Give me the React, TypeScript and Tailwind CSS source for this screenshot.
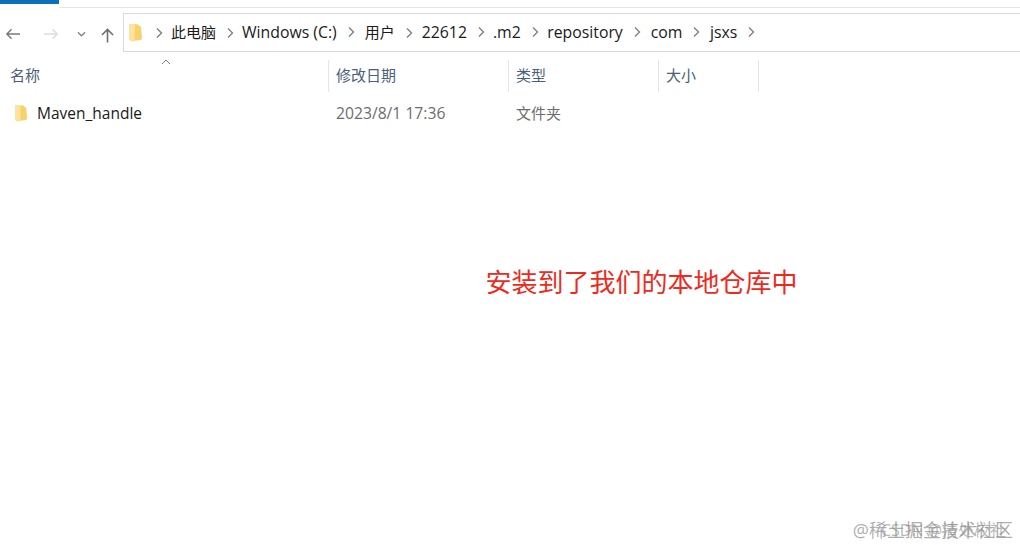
const crumbs = [
  { label: "此电脑", className: "ml-[8px] text-[15px]" },
  { label: "Windows (C:)", className: "ml-[8px]" },
  { label: "用户", className: "ml-[10px] text-[15px]" },
  { label: "22612", className: "ml-[9px]" },
  { label: ".m2", className: "ml-[8px]" },
  { label: "repository", className: "ml-[8.500px]" },
  { label: "com", className: "ml-[10px]" },
  { label: "jsxs", className: "ml-[9.500px]" },
];

const columns = [
  { label: "修改日期", width: "w-[180px]" },
  { label: "类型", width: "w-[150px]" },
  { label: "大小", width: "w-[100px]" },
];

function Folder({ className }: { className: string }) {
  return (
    <svg viewBox="0 0 14 18" className={className}>
      <path d="M0 0h9l1 2 2 1v13l-9 1.500-3-1.500z" fill="#fce08a" />
      <path d="M6 1h3l3 2 1 11-1 2H6z" fill="#f7d26c" />
      <path d="M0 0h5v16H0z" fill="#fbe4a0" />
    </svg>
  );
}

function Chevron() {
  return (
    <svg viewBox="0 0 8 12" className="w-[8px] h-[12px] shrink-0">
      <path d="M2 1.500 6.500 6 2 10.500" fill="none" stroke="#808080" strokeWidth="1.4" />
    </svg>
  );
}

export default function App() {
  return (
    <div
      className="relative w-[1020px] h-[545px] overflow-hidden bg-white"
      style={{ fontFamily: '"Open Sans", "Noto Sans CJK SC", sans-serif' }}
    >
      {/* ribbon tab strip */}
      <div className="flex h-[8px]">
        <div className="w-[59px] h-[4px] bg-[#0d6fb8]" />
        <div className="flex-1 h-[8px] border-b border-[#e4e4e4]" />
      </div>

      {/* nav + address bar */}
      <div className="flex h-[39px] mt-[5px]">
        <div className="w-[123px] shrink-0 flex items-center pl-[5px] pt-[2px]">
          <svg viewBox="0 0 16 12" className="w-[15px] h-[12px]">
            <path d="M16 6H2M7 1 2 6l5 5" fill="none" stroke="#7a7a7a" strokeWidth="1.600" />
          </svg>
          <svg viewBox="0 0 16 12" className="w-[15px] h-[12px] ml-[24px]">
            <path d="M0 6h14M9 1l5 5-5 5" fill="none" stroke="#dcdcdc" strokeWidth="1.600" />
          </svg>
          <svg viewBox="0 0 10 6" className="w-[9px] h-[6px] ml-[18px]">
            <path d="M1 1l4 4 4-4" fill="none" stroke="#808080" strokeWidth="1.4" />
          </svg>
          <svg viewBox="0 0 14 16" className="w-[13px] h-[16px] ml-[15px] mt-[3px]">
            <path d="M7 16V2M1 8l6-6 6 6" fill="none" stroke="#6e6e6e" strokeWidth="1.700" />
          </svg>
        </div>
        <div className="flex-1 flex items-center border border-r-0 border-[#d9d9d9] pl-[5px] text-[15.8px] text-[#1a1a1a]">
          <Folder className="w-[14px] h-[18px] shrink-0" />
          <div className="ml-[12px]">
            <Chevron />
          </div>
          {crumbs.map((crumb) => (
            <div key={crumb.label} className="flex items-center">
              <span className={`${crumb.className} mr-[10px] leading-none whitespace-nowrap`}>{crumb.label}</span>
              <Chevron />
            </div>
          ))}
        </div>
      </div>

      {/* column headers */}
      <div className="relative flex h-[32px] mt-[8px] text-[15px] text-[#4c607a]">
        <div className="w-[329px] pl-[10px] pb-[2px] flex items-center border-r border-[#e5e5e5]">名称</div>
        {columns.map((col) => (
          <div key={col.label} className={`${col.width} pl-[7px] pb-[2px] flex items-center border-r border-[#e5e5e5]`}>
            {col.label}
          </div>
        ))}
        <svg viewBox="0 0 10 6" className="absolute left-[161px] top-[-1px] w-[10px] h-[6px]">
          <path d="M1 5l4-4 4 4" fill="none" stroke="#808080" strokeWidth="1" />
        </svg>
      </div>

      {/* file row */}
      <div className="flex items-center h-[24px] mt-[9px] text-[15.500px]">
        <div className="w-[329px] flex items-center pl-[15px] text-[#1a1a1a]">
          <Folder className="w-[13px] h-[17px] shrink-0" />
          <span className="ml-[9px] pt-[2px]">Maven_handle</span>
        </div>
        <div className="w-[180px] pl-[7px] pt-[2px] text-[15.700px] text-[#6d6d6d]">2023/8/1 17:36</div>
        <div className="pl-[7px] text-[15px] text-[#6d6d6d]">文件夹</div>
      </div>

      {/* red annotation */}
      <div className="flex justify-center pl-[263px] mt-[139px]">
        <p className="text-[26px] leading-[36px] text-[#ee2a1c] whitespace-nowrap">安装到了我们的本地仓库中</p>
      </div>

      {/* overlapping watermarks */}
      <div className="absolute right-[7px] bottom-[4px] text-[18px] leading-[22px] text-[#8a8a8a]/70 whitespace-nowrap">
        @稀土掘金技术社区
      </div>
      <div className="absolute right-[14px] bottom-[4px] text-[16px] leading-[22px] text-[#8a8a8a]/60 whitespace-nowrap">
        CSDN @清处校社
      </div>
    </div>
  );
}
